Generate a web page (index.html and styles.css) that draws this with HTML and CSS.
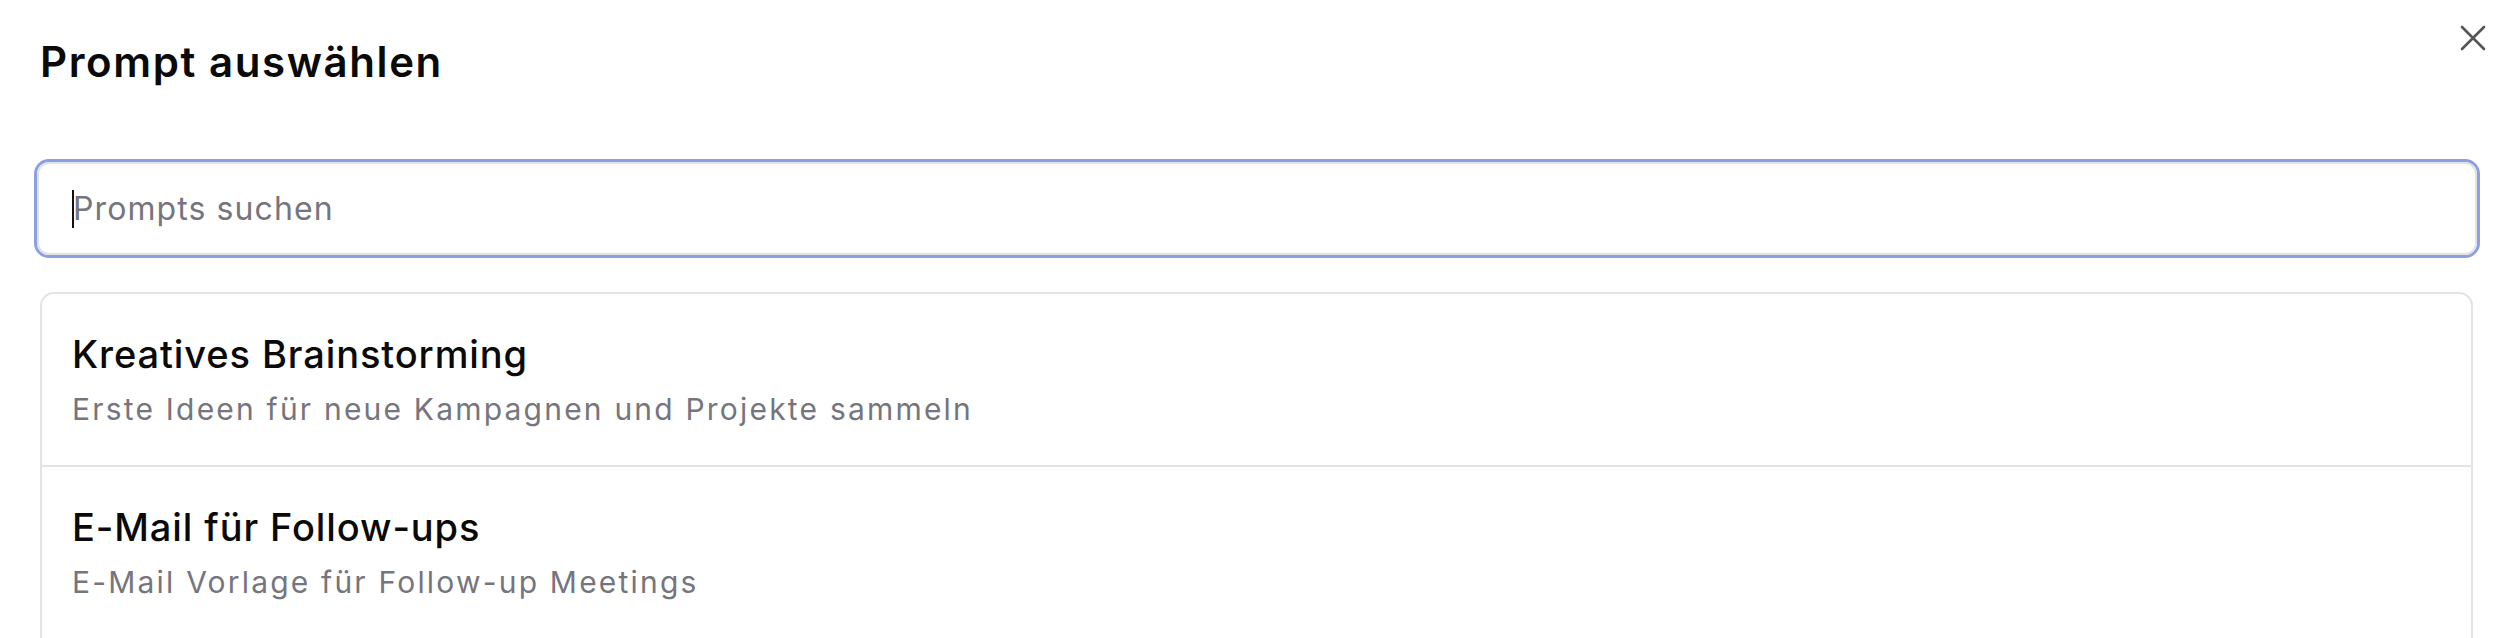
FILE: index.html
```html
<!DOCTYPE html>
<html lang="de">
<head>
<meta charset="utf-8">
<title>Prompt auswählen</title>
<link rel="stylesheet" href="styles.css">
</head>
<body>
<div class="dialog">
  <button class="close" aria-label="Schließen">
    <svg width="26" height="26" viewBox="0 0 26 26" fill="none" stroke="#555555" stroke-width="2.6" stroke-linecap="round"><path d="M2 2L24 24M24 2L2 24"/></svg>
  </button>
  <h1 class="title">Prompt auswählen</h1>
  <div class="search"><span class="caret"></span><input class="search-input" type="text" placeholder="Prompts suchen"></div>
  <ul class="list">
    <li class="item">
      <div class="item-title">Kreatives Brainstorming</div>
      <div class="item-sub">Erste Ideen für neue Kampagnen und Projekte sammeln</div>
    </li>
    <li class="item">
      <div class="item-title">E-Mail für Follow-ups</div>
      <div class="item-sub">E-Mail Vorlage für Follow-up Meetings</div>
    </li>
  </ul>
</div>
</body>
</html>
```

FILE: styles.css
```css
html, body {
  margin: 0;
  padding: 0;
  background: #ffffff;
  overflow: hidden;
  height: 638px;
}
.dialog {
  position: relative;
  padding: 34px 39px 0 37px;
  font-family: Inter, "Noto Sans", sans-serif;
}
.close {
  position: absolute;
  top: 25px;
  right: 30px;
  width: 26px;
  height: 26px;
  padding: 0;
  border: 0;
  background: transparent;
  display: flex;
}
.title {
  margin: 0 0 0 3px;
  font-size: 42px;
  line-height: 56px;
  font-weight: 600;
  color: #0a0a0a;
  letter-spacing: 1.6px;
}
.search {
  margin-top: 72px;
  height: 93px;
  box-sizing: border-box;
  border: 2px solid #e2e2e4;
  border-radius: 12px;
  box-shadow: 0 0 0 3px #8c9fe3;
  display: flex;
  align-items: center;
  padding-left: 33px;
}
.caret {
  width: 2px;
  height: 38px;
  background: #111;
  flex: none;
  margin-right: -1px;
}
.search-input {
  flex: 1;
  border: 0;
  outline: none;
  background: transparent;
  padding: 0;
  font-family: Inter, "Noto Sans", sans-serif;
  font-size: 32px;
  letter-spacing: 1.1px;
  color: #0a0a0a;
}
.search-input::placeholder {
  color: #75757e;
}
.list {
  list-style: none;
  margin: 37px 4px 0 3px;
  padding: 0;
  min-height: 400px;
  border: 2px solid #e4e4e7;
  border-radius: 14px;
}
.item {
  padding: 36px 34px 36px 30px;
  border-bottom: 2px solid #e4e4e7;
}
.item-title {
  font-size: 38px;
  line-height: 48px;
  font-weight: 500;
  color: #0a0a0a;
  letter-spacing: 0.9px;
}
.item-sub {
  margin-top: 11px;
  font-size: 30px;
  line-height: 40px;
  color: #75757e;
  letter-spacing: 2.2px;
}
```
